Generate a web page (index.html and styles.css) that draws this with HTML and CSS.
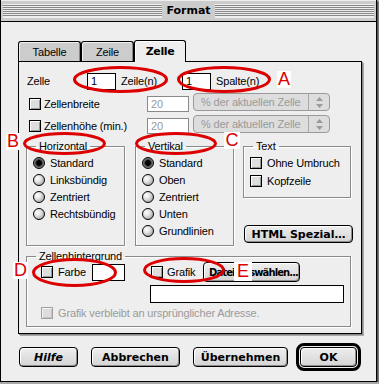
FILE: index.html
```html
<!DOCTYPE html>
<html lang="de">
<head>
    <meta charset="UTF-8">
    <meta name="viewport" content="width=device-width, initial-scale=1.0">
    <title>Format</title>
    <link rel="stylesheet" href="styles.css">
</head>
<body>

    <div class="window">
        <!-- Title bar -->
        <div class="titlebar">
            <span class="stripes"></span>
            <span class="title">Format</span>
            <span class="stripes"></span>
        </div>

        <div class="content">
            <!-- Tabs -->
            <div class="tabs">
                <div class="tab tab-tabelle">Tabelle</div>
                <div class="tab tab-zeile">Zeile</div>
                <div class="tab tab-zelle active">Zelle</div>
            </div>

            <div class="panel">
                <div class="row row-cell">
                    <span class="lbl-zelle">Zelle</span>
                    <span class="field field-num">1</span>
                    <span class="unit unit-zeile">Zeile(n)</span>
                    <span class="field field-num">1</span>
                    <span class="unit">Spalte(n)</span>
                </div>

                <div class="row row-size">
                    <span class="check"></span>
                    <span class="lbl-size">Zellenbreite</span>
                    <span class="field field-dim">20</span>
                    <span class="popup">
                        <span class="popup-text">% der aktuellen Zelle</span>
                        <span class="popup-arrows">
                            <svg width="7" height="11" viewBox="0 0 7 11"><polygon points="0,4 3.5,0 7,4" /><polygon points="0,7 3.5,11 7,7" /></svg>
                        </span>
                    </span>
                </div>

                <div class="row row-size row-height">
                    <span class="check"></span>
                    <span class="lbl-size">Zellenhöhe (min.)</span>
                    <span class="field field-dim">20</span>
                    <span class="popup">
                        <span class="popup-text">% der aktuellen Zelle</span>
                        <span class="popup-arrows">
                            <svg width="7" height="11" viewBox="0 0 7 11"><polygon points="0,4 3.5,0 7,4" /><polygon points="0,7 3.5,11 7,7" /></svg>
                        </span>
                    </span>
                </div>

                <div class="groups">
                    <fieldset class="group group-align">
                        <legend>Horizontal</legend>
                        <div class="option"><span class="radio on"></span>Standard</div>
                        <div class="option"><span class="radio"></span>Linksbündig</div>
                        <div class="option"><span class="radio"></span>Zentriert</div>
                        <div class="option"><span class="radio"></span>Rechtsbündig</div>
                    </fieldset>

                    <fieldset class="group group-align group-vert">
                        <legend>Vertikal</legend>
                        <div class="option"><span class="radio on"></span>Standard</div>
                        <div class="option"><span class="radio"></span>Oben</div>
                        <div class="option"><span class="radio"></span>Zentriert</div>
                        <div class="option"><span class="radio"></span>Unten</div>
                        <div class="option"><span class="radio"></span>Grundlinien</div>
                    </fieldset>

                    <div class="side">
                        <fieldset class="group group-text">
                            <legend>Text</legend>
                            <div class="option"><span class="check"></span>Ohne Umbruch</div>
                            <div class="option"><span class="check"></span>Kopfzeile</div>
                        </fieldset>
                        <button class="btn btn-html">HTML Spezial…</button>
                    </div>
                </div>

                <fieldset class="group group-bg">
                    <legend>Zellenhintergrund</legend>
                    <div class="bg-row">
                        <span class="check check-farbe"></span>
                        <span class="lbl-farbe">Farbe</span>
                        <span class="swatch"></span>
                        <span class="check check-grafik"></span>
                        <span class="lbl-grafik">Grafik</span>
                        <button class="btn btn-file">Datei auswählen...</button>
                    </div>
                    <div class="field field-path"></div>
                    <div class="bg-keep">
                        <span class="check disabled"></span>
                        <span class="lbl-keep">Grafik verbleibt an ursprünglicher Adresse.</span>
                    </div>
                </fieldset>
            </div>

            <!-- Dialog buttons -->
            <div class="buttons">
                <button class="btn btn-help">Hilfe</button>
                <button class="btn btn-cancel">Abbrechen</button>
                <button class="btn btn-apply">Übernehmen</button>
                <span class="default-ring"><button class="btn btn-ok">OK</button></span>
            </div>
        </div>

        <!-- Red annotations -->
        <svg class="marks" width="379" height="384">
            <ellipse cx="120.5" cy="79.5" rx="46" ry="12" />
            <ellipse cx="224" cy="79.5" rx="45.5" ry="12" />
            <ellipse cx="64.5" cy="143.5" rx="40" ry="10" />
            <ellipse cx="176" cy="143.5" rx="39.5" ry="10" />
            <ellipse cx="74.5" cy="272.5" rx="41" ry="13" />
            <ellipse cx="184" cy="270" rx="39.5" ry="11.5" />
        </svg>
        <span class="letter letter-a">A</span>
        <span class="letter letter-b">B</span>
        <span class="letter letter-c">C</span>
        <span class="letter letter-d">D</span>
        <span class="letter letter-e">E</span>
    </div>

</body>
</html>
```

FILE: styles.css
```css
body {
    margin: 0;
    background-color: #a8a8a8;
    font-family: "Liberation Sans", Arial, sans-serif;
    font-size: 11px;
    letter-spacing: -0.15px;
    color: #000;
}

.window {
    position: relative;
    width: 377px;
    height: 382px;
    box-sizing: border-box;
    background-color: #eeeeee;
    border-left: 1px solid #000;
    border-right: 1px solid #000;
    border-bottom: 1px solid #000;
    box-shadow: 1px 1px 0 #555, 2px 2px 0 #777;
}

/* Title bar */
.titlebar {
    height: 21px;
    display: flex;
    align-items: center;
    padding: 0 2px;
    background-color: #cccccc;
    border-bottom: 1px solid #000;
    box-shadow: inset 0 1px 0 #eee;
}

.stripes {
    flex: 1;
    height: 13px;
    background: repeating-linear-gradient(to bottom, #eee 0 1px, #888 1px 2px);
    border-bottom: 1px solid #eee;
}

.title {
    padding: 0 4px;
    font-family: "DejaVu Sans", sans-serif;
    font-weight: bold;
    font-size: 11px;
    letter-spacing: 0;
}

.content {
    padding: 18px 0 0 17px;
}

/* Tabs */
.tabs {
    display: flex;
    align-items: flex-end;
    height: 21px;
    position: relative;
    z-index: 1;
}

.tab {
    height: 20px;
    box-sizing: border-box;
    border: 1px solid #000;
    border-bottom: none;
    border-radius: 3px 3px 0 0;
    background-color: #cccccc;
    box-shadow: inset 1px 1px 0 #eee, inset -1px 0 0 #888;
    text-align: center;
    line-height: 20px;
}

.tab-tabelle { width: 63px; }
.tab-zeile { width: 53px; }

.tab.active {
    width: 52px;
    height: 22px;
    margin-bottom: -1px;
    background-color: #eeeeee;
    box-shadow: inset 1px 1px 0 #fff;
    font-family: "DejaVu Sans", sans-serif;
    font-weight: bold;
    letter-spacing: -0.4px;
    line-height: 22px;
}

.panel {
    width: 344px;
    height: 273px;
    box-sizing: border-box;
    border: 1px solid #000;
    box-shadow: 1px 1px 0 #888, 2px 2px 0 #aaa;
}

/* Rows */
.row {
    display: flex;
    align-items: flex-start;
    padding-left: 8px;
}

.row-cell {
    margin-top: 11px;
    height: 17px;
    line-height: 17px;
}

.lbl-zelle { width: 60px; }

.field {
    box-sizing: border-box;
    border: 1px solid #000;
    background-color: #fff;
    padding-left: 3px;
}

.field-num {
    width: 29px;
    height: 17px;
    line-height: 15px;
}

.unit { margin-left: 5px; }
.unit-zeile { width: 61px; }

.row-size {
    margin-top: 3px;
    height: 18px;
}

.row-height { margin-top: 4px; }

.check {
    display: inline-block;
    flex: none;
    width: 12px;
    height: 12px;
    box-sizing: border-box;
    border: 1px solid #000;
    background-color: #dddddd;
    box-shadow: inset 1px 1px 0 #fff, inset -1px -1px 0 #999;
}

.check.disabled {
    border-color: #a0a0a0;
    box-shadow: inset 1px 1px 0 #f4f4f4, inset -1px -1px 0 #c4c4c4;
}

.row-size .check {
    margin: 5px 0 0 2px;
}

.lbl-size {
    width: 103px;
    margin-left: 3px;
    line-height: 18px;
    padding-top: 2px;
}

.field-dim {
    width: 42px;
    height: 16px;
    margin-top: 3px;
    border-color: #8a8a8a;
    color: #9a9a9a;
    line-height: 14px;
}

.popup {
    display: flex;
    width: 137px;
    height: 18px;
    margin-left: 4px;
    box-sizing: border-box;
    border: 1px solid #9a9a9a;
    border-radius: 4px;
    background-color: #dddddd;
    color: #9a9a9a;
}

.popup-text {
    flex: 1;
    padding-left: 7px;
    line-height: 16px;
}

.popup-arrows {
    width: 20px;
    border-left: 1px solid #a8a8a8;
    display: flex;
    align-items: center;
    justify-content: center;
}

.popup-arrows svg { fill: #9a9a9a; }

/* Group boxes */
.groups {
    display: flex;
    align-items: flex-start;
    margin: 7px 0 0 7px;
}

.group {
    margin: 0;
    padding: 0;
    min-width: 0;
    box-sizing: border-box;
    border: 1px solid #8a8a8a;
    box-shadow: 1px 1px 0 #fff, inset 1px 1px 0 #fff;
}

.group legend {
    margin-left: 9px;
    padding: 0 3px;
    line-height: 13px;
}

.group-align {
    width: 99px;
    height: 106px;
    padding-top: 1px;
}

.group-vert { margin-left: 10px; }

.option {
    display: flex;
    align-items: center;
    height: 17px;
}

.radio {
    width: 12px;
    height: 12px;
    margin: 0 5px 0 6px;
    box-sizing: border-box;
    border: 1px solid #000;
    border-radius: 50%;
    background: radial-gradient(circle at 35% 35%, #fff 0, #e4e4e4 35%, #8c8c8c 100%);
}

.radio.on {
    background: radial-gradient(circle, #000 0 2.5px, #333 3px, #777 4.5px, #aaa 100%);
}

.side {
    display: flex;
    flex-direction: column;
    margin-left: 9px;
}

.group-text {
    width: 108px;
    height: 58px;
    padding-top: 1px;
}

.group-text .option { height: 18px; }

.group-text .check { margin: 0 5px 0 6px; }

/* Buttons */
.btn {
    height: 20px;
    padding: 0;
    box-sizing: border-box;
    border: 1px solid #000;
    border-radius: 4px;
    background: linear-gradient(#eeeeee, #d4d4d4);
    box-shadow: inset 1px 1px 0 #fff, inset -1px -1px 0 #8c8c8c;
    font-family: "DejaVu Sans", sans-serif;
    font-weight: bold;
    font-size: 11px;
    color: #000;
}

.btn-html {
    width: 109px;
    height: 18px;
    margin: 27px 0 0 1px;
}

.group-bg {
    width: 325px;
    height: 77px;
    margin: 4px 0 0 7px;
}

.bg-row {
    display: flex;
    align-items: center;
    height: 20px;
    margin-top: -1px;
}

.check-farbe { margin-left: 14px; }
.lbl-farbe { width: 34px; margin-left: 5px; }

.swatch {
    width: 33px;
    height: 17px;
    box-sizing: border-box;
    border: 1px solid #000;
    background-color: #fff;
}

.check-grafik { margin-left: 26px; }
.lbl-grafik { width: 36px; margin-left: 4px; }

.btn-file {
    width: 97px;
    padding-left: 5px;
    text-align: left;
    white-space: nowrap;
    overflow: hidden;
    font-size: 10px;
    letter-spacing: -0.9px;
}

.field-path {
    width: 194px;
    height: 18px;
    margin: 3px 0 0 123px;
}

.bg-keep {
    display: flex;
    align-items: center;
    height: 15px;
    margin-top: 2px;
}

.bg-keep .check { margin-left: 14px; }

.lbl-keep {
    margin-left: 5px;
    color: #9a9a9a;
}

/* Dialog buttons */
.buttons {
    display: flex;
    align-items: center;
    margin-top: 9px;
}

.btn-help {
    width: 59px;
    margin-left: 1px;
    font-style: italic;
}

.btn-cancel {
    width: 89px;
    margin-left: 13px;
}

.btn-apply {
    width: 95px;
    margin-left: 13px;
}

.default-ring {
    margin-left: 8px;
    padding: 1px;
    border: 3px solid #000;
    border-radius: 8px;
    display: flex;
}

.btn-ok { width: 57px; }

/* Annotations */
.marks {
    position: absolute;
    left: -1px;
    top: 0;
    pointer-events: none;
}

.marks ellipse {
    fill: none;
    stroke: #dd0000;
    stroke-width: 3;
}

.letter {
    position: absolute;
    background-color: #fff;
    color: #dd0000;
    font-size: 18px;
    letter-spacing: 0;
    text-align: center;
    line-height: 17px;
    height: 17px;
}

.letter-a { left: 276px; top: 71px; width: 14px; }
.letter-b { left: 5px; top: 133px; width: 14px; }
.letter-c { left: 223px; top: 132px; width: 16px; }
.letter-d { left: 12px; top: 262px; width: 15px; }
.letter-e { left: 233px; top: 262px; width: 18px; height: 19px; line-height: 19px; }
```
